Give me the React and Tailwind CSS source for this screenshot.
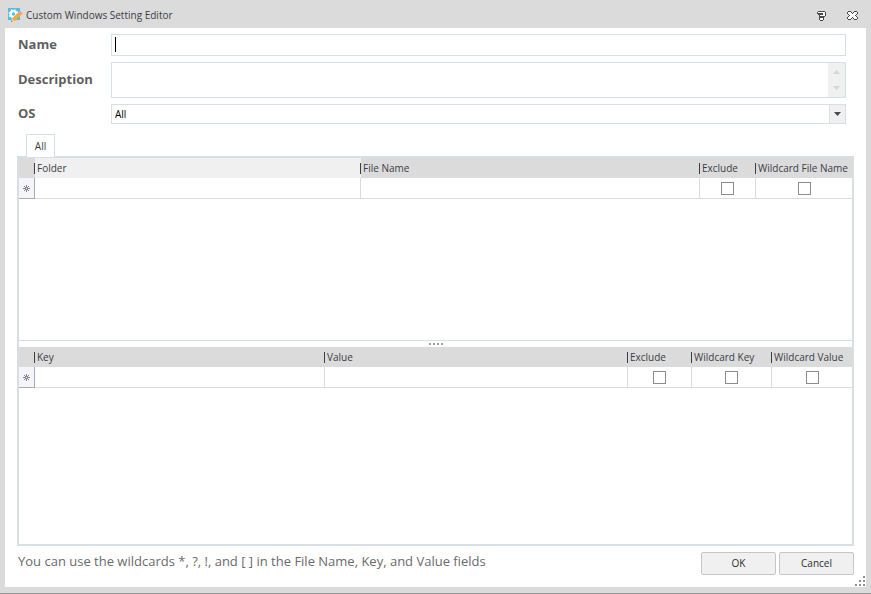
/**
 * Custom Windows Setting Editor dialog
 */

import { useState } from 'react';

const FILE_COLUMNS = [
  { label: 'Folder', width: 'w-[326px]', hover: true },
  { label: 'File Name', width: '' },
  { label: 'Exclude', width: 'w-14', check: true },
  { label: 'Wildcard File Name', width: 'w-24', check: true },
];

const REGISTRY_COLUMNS = [
  { label: 'Key', width: 'w-[290px]' },
  { label: 'Value', width: '' },
  { label: 'Exclude', width: 'w-16', check: true },
  { label: 'Wildcard Key', width: 'w-20', check: true },
  { label: 'Wildcard Value', width: 'w-20', check: true },
];

function AppIcon() {
  return (
    <svg className="w-4 h-4 shrink-0" viewBox="0 0 16 16" aria-hidden="true">
      <rect x="1" y="0" width="12" height="12" fill="#4fbfe8" />
      <circle cx="6.5" cy="6" r="2.8" fill="#4fbfe8" stroke="#fff" strokeWidth="2.2" />
      <circle cx="6.5" cy="6" r="4.3" fill="none" stroke="#fff" strokeWidth="1.2" strokeDasharray="1.7 1.677" />
      <path d="M5 10.4 12 3.6 14.8 6.2 7.8 13 4.6 13.6z" fill="#f7a941" />
      <path d="M11.8 3.6 12.8 2.6 15.6 5.2 14.6 6.4z" fill="#ee9f8a" />
      <path d="M4.9 10.8 7.4 13.2 4.4 13.8z" fill="#f5dcb5" />
      <path d="M4.2 12.8h1v1h-1z" fill="#555" />
    </svg>
  );
}

function HelpIcon() {
  return (
    <svg className="w-[9px] h-2.5" viewBox="0 0 9 10" shapeRendering="crispEdges" aria-hidden="true">
      <path d="M1 0h7v1h1v4h-1v1h-1v3h-1v1h-3v-1h-1v-5h-1v-1h-1v-2h1z" fill="#4a4a4a" />
      <path d="M1 1h7v1h-7zM6 2h2v1h-2zM3 3h5v2h-5zM3 7h3v2h-3z" fill="#fff" />
      <path d="M3 3h3v1h-3z" fill="#4a4a4a" />
    </svg>
  );
}

function CloseIcon() {
  return (
    <svg className="w-[11px] h-[9px]" viewBox="0 0 11 9" shapeRendering="crispEdges" aria-hidden="true">
      <path
        d="M1.5.5h2l2 2 2-2h2l1 1v1l-2 2 2 2v1l-1 1h-2l-2-2-2 2h-2l-1-1v-1l2-2-2-2v-1z"
        fill="#fff"
        stroke="#4a4a4a"
      />
    </svg>
  );
}

function NewRowIcon() {
  return (
    <svg className="w-[7px] h-[7px] mx-auto" viewBox="0 0 7 7" aria-hidden="true">
      <path d="M3.5 0v7M0 3.5h7M1 1l5 5M6 1 1 6" stroke="#73737d" strokeWidth="0.9" />
      <circle cx="3.5" cy="3.5" r="0.7" fill="#f4f5f8" />
    </svg>
  );
}

function Arrow({ up = false }) {
  return (
    <svg className="w-[7px] h-1" viewBox="0 0 7 4" aria-hidden="true">
      <path d={up ? 'M0 4h7L3.5 0z' : 'M0 0h7L3.5 4z'} fill="currentColor" />
    </svg>
  );
}

function SettingGrid({ name, columns }) {
  return (
    <table aria-label={name} className="w-full table-fixed border-separate border-spacing-0">
      <colgroup>
        <col className="w-4" />
        {columns.map((column) => (
          <col key={column.label} className={column.width} />
        ))}
      </colgroup>
      <thead>
        <tr className="h-5 bg-[#dbdbdb]">
          <td className="p-0" />
          {columns.map((column) => (
            <th
              key={column.label}
              scope="col"
              className={`p-0 text-left font-normal text-[#3c3c46] ${column.hover ? 'bg-[#f0f0f0]' : ''}`}
            >
              <span className="-ml-px flex h-[11px] items-center whitespace-nowrap border-l border-[#3c3c46] pl-0.5 leading-3">
                {column.label}
              </span>
            </th>
          ))}
        </tr>
      </thead>
      <tbody>
        <tr className="h-[21px]">
          <td className="border-r border-b border-[#a5abb8] bg-[#f4f5f8] p-0">
            <NewRowIcon />
          </td>
          {columns.map((column) => (
            <td key={column.label} className="border-r border-b border-[#dbdbdb] p-0 text-center last:border-r-0">
              {column.check ? (
                <input
                  type="checkbox"
                  aria-label={column.label}
                  className="block mx-auto size-[13px] appearance-none border border-[#8c8c8c] bg-white checked:bg-[#8c8c8c]"
                />
              ) : (
                <input
                  type="text"
                  aria-label={column.label}
                  className="block h-5 w-full bg-transparent px-0.5 outline-none"
                />
              )}
            </td>
          ))}
        </tr>
      </tbody>
    </table>
  );
}

function App() {
  const [name, setName] = useState('');
  const [description, setDescription] = useState('');
  const [os, setOs] = useState('All');

  const label = 'text-[13px] font-bold text-[#5f5f5f]';
  const field = 'block w-full border border-[#d6dfe6] bg-white px-[3px] text-black outline-none';
  const button =
    'h-[23px] w-[75px] rounded-xs border border-[#c6c6c6] bg-[#f0f0f0] text-[#2d2d2d] hover:bg-[#e6e6e6]';

  return (
    <div className="flex h-screen min-h-96 flex-col border-b border-[#989898] bg-[#dbdbdb] px-[5px] pb-1.5 font-['Open_Sans',sans-serif] text-[10px]">
      {/* Title bar */}
      <header className="flex h-7 shrink-0 items-center pt-[3px] pr-2 pl-0.5">
        <AppIcon />
        <h1 className="ml-[3px] flex-1 text-[#3c3c46]">Custom Windows Setting Editor</h1>
        <button type="button" aria-label="Help" className="mr-[21px]">
          <HelpIcon />
        </button>
        <button type="button" aria-label="Close">
          <CloseIcon />
        </button>
      </header>

      <main className="relative flex min-h-0 flex-1 flex-col bg-white px-3 pt-1.5 pb-3">
        {/* Form fields */}
        <div className="grid grid-cols-[93px_1fr] items-center gap-y-1.5 pr-2 pl-px">
          <label htmlFor="name" className={label}>Name</label>
          <div className="relative">
            <input
              id="name"
              type="text"
              value={name}
              onChange={(e) => setName(e.target.value)}
              className={`${field} peer h-[22px]`}
            />
            <span className="pointer-events-none absolute top-[3px] left-1 h-[15px] w-px bg-black peer-focus:hidden" />
          </div>

          <label htmlFor="description" className={label}>Description</label>
          <div className="relative">
            <textarea
              id="description"
              value={description}
              onChange={(e) => setDescription(e.target.value)}
              className={`${field} h-9 resize-none overflow-hidden pr-5`}
            />
            <span className="pointer-events-none absolute inset-y-px right-px flex w-[17px] flex-col items-center justify-between bg-[#f0f0f0] py-[7px] text-[#d6d6d6]">
              <Arrow up />
              <Arrow />
            </span>
          </div>

          <label htmlFor="os" className={label}>OS</label>
          <div className="relative">
            <select
              id="os"
              value={os}
              onChange={(e) => setOs(e.target.value)}
              className={`${field} h-5 appearance-none`}
            >
              <option>All</option>
            </select>
            <span className="pointer-events-none absolute inset-y-px right-px flex w-4 items-center justify-center border-l border-[#d6dfe6] bg-[#f0f0f0] text-[#4a4a4a]">
              <Arrow />
            </span>
          </div>
        </div>

        {/* Tabs */}
        <div role="tablist" className="mt-2.5 flex pl-[9px]">
          <button
            type="button"
            role="tab"
            aria-selected="true"
            className="relative z-10 -mb-px h-[23px] w-[29px] border border-b-0 border-[#d6dfe6] bg-white text-[#3c3c46]"
          >
            All
          </button>
        </div>

        <div role="tabpanel" className="flex min-h-0 flex-1 flex-col border-2 border-[#d6dfe6]">
          <section className="min-h-0 flex-[182] overflow-hidden border-b border-[#d6dfe6]">
            <SettingGrid name="Files" columns={FILE_COLUMNS} />
          </section>
          <div role="separator" className="flex h-1.5 shrink-0 cursor-row-resize items-center justify-center gap-0.5">
            <span className="size-0.5 bg-[#98a2ae]" />
            <span className="size-0.5 bg-[#98a2ae]" />
            <span className="size-0.5 bg-[#98a2ae]" />
            <span className="size-0.5 bg-[#98a2ae]" />
          </div>
          <section className="min-h-0 flex-[197] overflow-hidden">
            <SettingGrid name="Registry" columns={REGISTRY_COLUMNS} />
          </section>
        </div>

        {/* Footer */}
        <footer className="flex shrink-0 items-start justify-between pt-1.5">
          <p className="pl-px text-[13px] leading-[18px] text-[#6a6a6a]">
            You can use the wildcards *, ?, !, and [ ] in the File Name, Key, and Value fields
          </p>
          <div className="flex gap-[3px]">
            <button type="button" className={button}>OK</button>
            <button type="button" className={button}>Cancel</button>
          </div>
        </footer>

        {/* Resize grip */}
        <svg
          className="absolute right-px bottom-px h-2.5 w-2.5 cursor-nwse-resize"
          viewBox="0 0 10 10"
          shapeRendering="crispEdges"
          aria-hidden="true"
        >
          <path d="M8 0h2v2H8zM4 4h2v2H4zM8 4h2v2H8zM0 8h2v2H0zM4 8h2v2H4zM8 8h2v2H8z" fill="#8f8f98" />
        </svg>
      </main>
    </div>
  );
}

export default App;
